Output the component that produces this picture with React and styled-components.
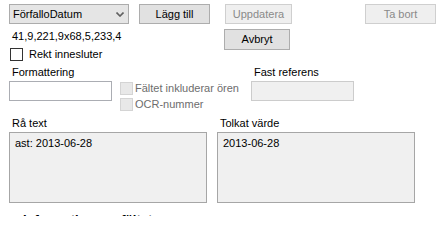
import React from 'react';
import styled, { createGlobalStyle } from 'styled-components';

const Global = createGlobalStyle`
    html, body {
        margin: 0;
        padding: 0;
        background: #ffffff;
        overflow: hidden;
    }
    body {
        font-family: "Liberation Sans", Arial, sans-serif;
        font-size: 11px;
        color: #000;
    }
`;

const Page = styled.div`
    width: 444px;
    height: 216px;
    padding: 4px 8px 0 9px;
    box-sizing: border-box;
    overflow: hidden;
    line-height: 13px;
`;

const Row = styled.div`
    display: flex;
    align-items: ${(p) => p.$align || 'flex-start'};
    gap: ${(p) => p.$gap || 0}px;
    margin-top: ${(p) => p.$top || 0}px;
`;

const Select = styled.div`
    width: 120px;
    height: 20px;
    box-sizing: border-box;
    border: 1px solid #acacac;
    background: #e5e5e5;
    display: flex;
    align-items: center;
    justify-content: space-between;
    padding: 0 4px 0 3px;
`;

const Chevron = () => (
    <svg width="8" height="5" viewBox="0 0 8 5">
        <path d="M0.5 0.5 L4 4 L7.5 0.5" fill="none" stroke="#606060" strokeWidth="1.6" />
    </svg>
);

const Button = styled.button`
    width: ${(p) => p.$w}px;
    height: ${(p) => p.$h || 20}px;
    box-sizing: border-box;
    margin: 0;
    padding: 0;
    font: inherit;
    border: 1px solid ${(p) => (p.disabled ? '#cfcfcf' : '#adadad')};
    background: ${(p) => (p.disabled ? '#efefef' : '#e1e1e1')};
    color: ${(p) => (p.disabled ? '#8a8a8a' : '#000')};
    margin-left: ${(p) => p.$ml || 0}px;
    margin-top: ${(p) => p.$mt || 0}px;
`;

const Spacer = styled.div`
    flex: 1;
`;

const LeftCol = styled.div`
    width: 215px;
    display: flex;
    flex-direction: column;
`;

const Coords = styled.div`
    padding: 6px 0 0 3px;
    height: 13px;
`;

const CheckRow = styled.label`
    display: flex;
    align-items: center;
    gap: ${(p) => p.$gap || 6}px;
    margin-top: ${(p) => p.$top || 0}px;
    margin-left: ${(p) => p.$left || 0}px;
    color: ${(p) => (p.$disabled ? '#6d6d6d' : '#000')};
`;

const Box = styled.span`
    width: 13px;
    height: 13px;
    box-sizing: border-box;
    border: 1px solid ${(p) => (p.$disabled ? '#d4d4d4' : '#333')};
    background: ${(p) => (p.$disabled ? '#e8e8e8' : '#fff')};
    flex: none;
`;

const Field = styled.div`
    display: flex;
    flex-direction: column;
    width: ${(p) => p.$w}px;
`;

const Label = styled.div`
    padding-left: 3px;
    height: 13px;
    margin-bottom: ${(p) => p.$mb || 2}px;
`;

const Input = styled.div`
    height: 20px;
    box-sizing: border-box;
    border: 1px solid ${(p) => (p.$disabled ? '#cccccc' : '#abadb3')};
    background: ${(p) => (p.$disabled ? '#f0f0f0' : '#ffffff')};
`;

const Options = styled.div`
    display: flex;
    flex-direction: column;
    padding-top: 16px;
    margin-left: 8px;
    width: 131px;
`;

const TextArea = styled.div`
    height: 71px;
    box-sizing: border-box;
    border: 1px solid #a6a6a6;
    background: #f0f0f0;
    padding: 4px 5px;
`;

const Heading = styled.div`
    margin-top: 10px;
    padding-left: 14px;
    font-weight: bold;
    font-size: 13px;
`;

export default function App() {
    return (
        <Page>
            <Global />
            <Row>
                <Select>
                    <span>FörfalloDatum</span>
                    <Chevron />
                </Select>
                <Button $w={71} $ml={10}>Lägg till</Button>
                <Button $w={67} $ml={15} disabled>Uppdatera</Button>
                <Spacer />
                <Button $w={71} disabled>Ta bort</Button>
            </Row>
            <Row>
                <LeftCol>
                    <Coords>41,9,221,9x68,5,233,4</Coords>
                    <CheckRow $top={5} $left={1}>
                        <Box />
                        Rekt innesluter
                    </CheckRow>
                </LeftCol>
                <Button $w={66} $h={21} $mt={5}>Avbryt</Button>
            </Row>
            <Row $top={5}>
                <Field $w={103}>
                    <Label>Formattering</Label>
                    <Input />
                </Field>
                <Options>
                    <CheckRow $gap={2} $disabled>
                        <Box $disabled />
                        Fältet inkluderar ören
                    </CheckRow>
                    <CheckRow $gap={2} $top={3} $disabled>
                        <Box $disabled />
                        OCR-nummer
                    </CheckRow>
                </Options>
                <Field $w={103}>
                    <Label>Fast referens</Label>
                    <Input $disabled />
                </Field>
            </Row>
            <Row $top={6} $gap={10}>
                <Field $w={198}>
                    <Label>Rå text</Label>
                    <TextArea>ast: 2013-06-28</TextArea>
                </Field>
                <Field $w={198}>
                    <Label>Tolkat värde</Label>
                    <TextArea>2013-06-28</TextArea>
                </Field>
            </Row>
            <Heading>Information om fältet</Heading>
        </Page>
    );
}
